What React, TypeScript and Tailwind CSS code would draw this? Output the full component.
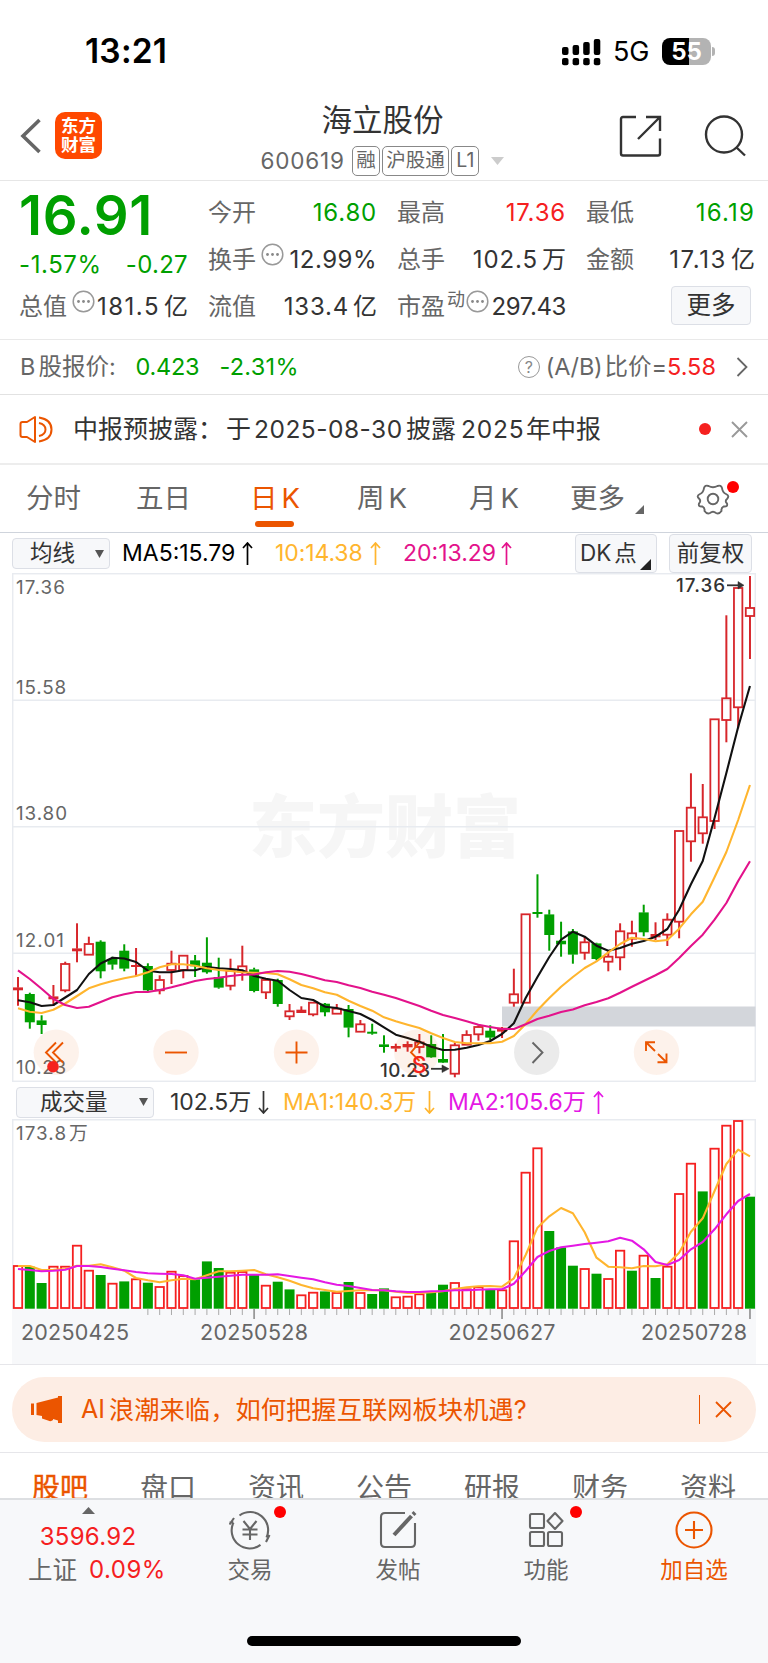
import type { ReactNode } from "react";

const RED = "#d7262b";
const GREEN = "#009f00";
const ORANGE = "#eb5500";

const STEP = 11.806;
const xAt = (i: number) => 18 + i * STEP;

type Kind = "r" | "g";
/** [kind, body top, body bottom, wick top, wick bottom] */
type Candle = [Kind, number, number, number, number];

const candles: Candle[] = [
  ["r", 987.7, 990, 977, 1005.7],
  ["g", 994.3, 1022, 992.7, 1028.7],
  ["g", 1020.7, 1024.7, 1015.3, 1034],
  ["r", 996.7, 999, 985, 1006],
  ["r", 964, 990.3, 961.7, 992.3],
  ["r", 948.7, 951, 923.3, 962.3],
  ["r", 944, 954.7, 936.7, 955],
  ["g", 942, 971, 940.3, 978.3],
  ["g", 959.3, 964.3, 956.7, 969.7],
  ["g", 951, 968.3, 944.3, 971.3],
  ["r", 965.3, 966.7, 948, 975.7],
  ["g", 966.3, 990, 963.3, 991],
  ["r", 980, 990.3, 975.3, 994.3],
  ["r", 963.7, 970, 950.7, 984],
  ["r", 955.7, 970, 955.7, 978.3],
  ["g", 960.7, 966, 955, 977],
  ["g", 963, 972, 937.3, 973.7],
  ["g", 977.3, 987.3, 957.7, 988.7],
  ["r", 970.7, 985.7, 958.7, 990.3],
  ["r", 966.3, 971.5, 945.7, 980.7],
  ["g", 969.7, 990.7, 967.7, 992.3],
  ["r", 980, 992.3, 978.3, 999],
  ["g", 980.3, 1003.7, 978.7, 1006.7],
  ["r", 1011.3, 1016.3, 1004, 1020],
  ["r", 1010, 1012.7, 1006.3, 1013],
  ["r", 1002.7, 1014.3, 1002, 1016.3],
  ["g", 1004, 1012, 1003, 1016.3],
  ["r", 1008.7, 1013.7, 1004, 1014],
  ["g", 1009.3, 1027.3, 1005, 1037.3],
  ["r", 1024.3, 1031.7, 1020, 1032],
  ["g", 1032, 1033.2, 1023.7, 1034.7],
  ["g", 1044.7, 1046.7, 1035.3, 1052.7],
  ["r", 1046.3, 1048.3, 1043.7, 1051.7],
  ["r", 1044.3, 1047, 1041.3, 1051.7],
  ["r", 1042.5, 1047, 1034, 1053.3],
  ["g", 1044.3, 1057, 1035.3, 1057.7],
  ["g", 1059.3, 1062.3, 1034, 1063],
  ["r", 1045.3, 1073.7, 1043, 1077.3],
  ["r", 1035, 1044.7, 1030.3, 1045],
  ["r", 1027, 1034.3, 1025.3, 1040.7],
  ["g", 1031, 1037.3, 1025.3, 1040],
  ["r", 1028, 1031.3, 1027, 1038],
  ["r", 994.3, 1002.7, 968.7, 1006.7],
  ["r", 914.3, 1002.7, 914.3, 1002.7],
  ["g", 912.3, 913.5, 874.3, 917.7],
  ["g", 914.7, 934.7, 909.7, 950.7],
  ["g", 941, 944, 921.7, 956.7],
  ["g", 931.7, 954.3, 929, 963.7],
  ["r", 942.3, 952.7, 936.7, 959.7],
  ["g", 943.7, 958.7, 942.7, 960.3],
  ["r", 956.7, 961.7, 951, 971.3],
  ["r", 931.3, 957.3, 923.3, 970.3],
  ["r", 933.3, 938.7, 920.7, 946.7],
  ["g", 912.7, 932, 904.7, 936.3],
  ["r", 934.3, 937, 922.3, 940],
  ["r", 919.7, 934.7, 913.3, 946],
  ["r", 831, 921.7, 831, 938.3],
  ["r", 807.7, 841.3, 773.3, 861.7],
  ["r", 817.3, 833.3, 784, 843.7],
  ["r", 719.3, 821, 719.3, 829],
  ["r", 698.3, 720, 615.3, 742.3],
  ["r", 588, 707.3, 588, 728.3],
  ["r", 608, 616, 576, 659],
];

const ma5 = [
  1000.3, 1002.3, 1006, 1005, 997.5, 990, 974, 963.5, 957.7, 958.5, 962, 970.7, 972.3, 972.3, 970.3, 970.3,
  967, 968.3, 969, 970.3, 976, 978.7, 980.7, 990, 998, 1000, 1006.7, 1008, 1011, 1014, 1020, 1027.3, 1034.7,
  1038, 1041.7, 1046.7, 1050, 1049.7, 1047.7, 1045, 1041, 1034, 1023.3, 998, 977, 957, 939.7, 931.7, 936.7,
  945.7, 950.7, 948, 943.7, 941, 936.7, 929, 909.7, 884.3, 861, 818, 773, 727, 686,
];
const ma10 = [
  1008.3, 1011.7, 1013, 1009.7, 1003.5, 996, 988.3, 984.3, 981, 978.3, 976, 972.3, 967.3, 964.3, 964.3, 965.7,
  968.3, 970, 971, 972.3, 972.7, 973, 974.3, 979.3, 985, 988.3, 992.3, 994.7, 1000.7, 1006, 1010.7, 1017.3,
  1021.3, 1024.7, 1028, 1033.3, 1038, 1042, 1043.3, 1043.3, 1043.3, 1041.7, 1036, 1024, 1010.3, 998, 986.7,
  977, 968, 961.3, 952.3, 944, 937.7, 939, 941.3, 940, 928.7, 914.3, 901.7, 877.3, 852, 820, 785,
];
const ma20 = [
  970.3, 979, 988.7, 999, 1005, 1008, 1006.7, 1002, 997.3, 994.3, 992, 992, 990, 987.3, 984.3, 981, 979, 977.7,
  976, 974.7, 974.5, 972.3, 971, 971.7, 974, 977, 980.3, 982, 985.3, 988, 991.7, 994.7, 998, 1002, 1006, 1010.7,
  1015, 1018, 1021.3, 1024.7, 1027, 1029, 1029, 1024.3, 1019, 1015.7, 1012, 1009.5, 1005.3, 1002, 998.3, 992.7,
  986.7, 981, 975.3, 969, 958, 946, 934.7, 919.7, 903, 881, 861.3,
];

/** Bar tops of the volume pane, colours in volumeKinds. */
const volumes = [
  1266, 1267, 1283.3, 1266.7, 1266.7, 1245.7, 1270.7, 1275.3, 1283.7, 1281.7, 1279.3, 1283, 1287, 1271.7, 1276,
  1279.7, 1261.7, 1268.3, 1272.7, 1272, 1275, 1285.7, 1282, 1289.7, 1295.3, 1292.7, 1291.7, 1293, 1282.3, 1293,
  1294.3, 1288.7, 1297.3, 1296.7, 1294.3, 1291.3, 1285, 1283, 1289.3, 1287.3, 1290, 1290.3, 1241.3, 1172.7,
  1148.3, 1231.3, 1247.7, 1266, 1269, 1274, 1279, 1250.7, 1271, 1255.7, 1278.3, 1266.7, 1194, 1163.7, 1191.7,
  1148.7, 1125.7, 1121, 1197,
];
const volumeKinds = "rggrrrrgrgrgrrrgggrrgrggrrgrgrgg" + "rrrggrrrgrrrrgggrgrrgrgrrrgrrrg";
const volMa1 = [
  1266, 1266, 1270, 1269.7, 1269, 1265.7, 1265.7, 1264.3, 1267.3, 1270.7, 1278, 1280.3, 1282.3, 1280.3, 1278.7,
  1279.3, 1275.3, 1271.3, 1271.3, 1270.7, 1270, 1274.3, 1277.3, 1280.7, 1285, 1288.3, 1290, 1291.7, 1291, 1290.3,
  1290.3, 1290.3, 1291.7, 1293, 1293, 1292.3, 1291.3, 1289, 1287.3, 1286.3, 1286, 1286.7, 1278.3, 1255, 1227.7,
  1216.3, 1208, 1213.3, 1232.3, 1257.7, 1266.7, 1267.3, 1268.3, 1266, 1266.3, 1264.3, 1252.7, 1231.7, 1218.3,
  1191, 1164, 1149.7, 1156.3,
];
const volMa2 = [
  1269, 1270, 1271.3, 1270.7, 1269.7, 1266, 1266, 1267, 1268.7, 1270.3, 1272, 1273.3, 1273.7, 1274, 1275.3,
  1278.7, 1277.7, 1276.7, 1275.7, 1274.7, 1274.7, 1274.7, 1274.3, 1276, 1277.7, 1279.3, 1282.3, 1284.7, 1286,
  1288, 1290, 1290.3, 1291.3, 1292, 1292, 1291.3, 1291, 1290.3, 1290.3, 1289.7, 1289.3, 1289.3, 1283.7, 1271,
  1257, 1251, 1247.3, 1245.7, 1244, 1242.7, 1241.3, 1237.7, 1240.7, 1249.3, 1262, 1265, 1260, 1249.3, 1242,
  1229.3, 1214.3, 1201, 1194,
];

function Line({ ys, color }: { ys: number[]; color: string }) {
  return (
    <polyline
      points={ys.map((y, i) => `${xAt(i)},${y}`).join(" ")}
      fill="none"
      stroke={color}
      strokeWidth="2.1"
      strokeLinejoin="round"
    />
  );
}

function CandleShape({ i, candle }: { i: number; candle: Candle }) {
  const [kind, top, bottom, high, low] = candle;
  const x = xAt(i);
  const color = kind === "r" ? RED : GREEN;
  const solid = kind === "g" || bottom - top < 4;
  return (
    <g stroke={color} strokeWidth="2">
      {high < top && <path d={`M${x} ${high}V${top}`} />}
      {low > bottom && <path d={`M${x} ${bottom}V${low}`} />}
      {solid ? (
        <rect x={x - 5} y={top - 0.3} width="10" height={Math.max(bottom - top + 0.6, 2)} fill={color} stroke="none" />
      ) : (
        <rect x={x - 4.2} y={top} width="8.4" height={bottom - top} fill="none" strokeWidth="1.8" />
      )}
    </g>
  );
}

function RoundButton({ x, gray, children }: { x: number; gray?: boolean; children: ReactNode }) {
  return (
    <g fill="none" stroke={gray ? "#666" : ORANGE} strokeWidth="1.9">
      <circle cx={x} cy="1052.3" r="22.7" fill={gray ? "#000" : ORANGE} fillOpacity="0.08" stroke="none" />
      {children}
    </g>
  );
}

function PriceChart() {
  return (
    <svg className="ml-3 block h-[509px] w-[744px]" viewBox="12 573 744 509">
      <text x="249" y="852" fontSize="68" textLength="272" className="fill-[#f6f6f6] font-black">
        东方财富
      </text>
      <g fill="none" stroke="#e8ebf0" strokeWidth="1.5">
        <rect x="12.7" y="573.7" width="742.6" height="507.6" />
        <path d="M12 700.2H756M12 826.7H756M12 953.3H756" />
      </g>
      <rect x="502" y="1006.5" width="253.5" height="20" fill="#d3d6db" />
      <g fontSize="18.8" fill="#666">
        <text x="16" y="594" textLength="49">17.36</text>
        <text x="16" y="694" textLength="50">15.58</text>
        <text x="16" y="820" textLength="51">13.80</text>
        <text x="16" y="947" textLength="48">12.01</text>
        <text x="16" y="1074" textLength="50">10.23</text>
      </g>
      {candles.map((c, i) => (
        <CandleShape key={i} i={i} candle={c} />
      ))}
      <Line ys={ma5} color="#111" />
      <Line ys={ma10} color="#ffb52e" />
      <Line ys={ma20} color="#e3128b" />
      <g fontSize="18.8" fill="#333" className="font-medium">
        <text x="676" y="592" textLength="49">17.36</text>
        <text x="380" y="1076.5" textLength="50">10.23</text>
      </g>
      <g stroke="#333" strokeWidth="1.8" fill="#333">
        <path d="M727 585.3H739" />
        <path d="M738 581.5L744 585.3L738 589Z" strokeWidth="0.5" />
        <path d="M431 1068.8H443" />
        <path d="M442 1065L449 1068.8L442 1072.5Z" strokeWidth="0.5" />
      </g>
      <RoundButton x={56.3}>
        <path d="M56 1042.5L46 1052.5L56 1062.5M63 1042.5L53 1052.5L63 1062.5" />
      </RoundButton>
      <RoundButton x={176}>
        <path d="M165 1052.5H187" />
      </RoundButton>
      <RoundButton x={296.5}>
        <path d="M285.5 1052.5H307.5M296.5 1041.5V1063.5" />
      </RoundButton>
      <RoundButton x={416.7}>
        <path d="M419.5 1042.5L411 1052.5L419.5 1061" />
      </RoundButton>
      <RoundButton x={536.7} gray>
        <path d="M532.5 1042.5L542.5 1052.5L532.5 1063" />
      </RoundButton>
      <RoundButton x={656.5}>
        <path d="M646 1051V1042.3H655M646 1042.3L655 1051M666.5 1053.5V1062.3H657.5M666.5 1062.3L658 1054" />
      </RoundButton>
      <circle cx="53" cy="1066.7" r="5.8" fill="#f5231d" />
      <text x="419.3" y="1073" textAnchor="middle" fontSize="23" fill="#f5231d" className="font-medium">
        S
      </text>
    </svg>
  );
}

function VolumeChart() {
  return (
    <svg className="ml-3 block h-[245px] w-[744px]" viewBox="12 1119 744 245">
      <rect x="12" y="1309" width="744" height="55" fill="#f7f8fa" />
      <path d="M12.7 1309V1119.7H755.3V1309" fill="none" stroke="#e8ebf0" strokeWidth="1.5" />
      <g fill="#666" fontSize="18.8">
        <text x="16" y="1140" textLength="50">173.8</text>
        <text x="69" y="1140">万</text>
      </g>
      {volumes.map((top, i) =>
        volumeKinds[i] === "r" ? (
          <rect key={i} x={xAt(i) - 4.2} y={top} width="8.4" height={1308 - top} fill="none" stroke="#f52020" strokeWidth="1.8" />
        ) : (
          <rect key={i} x={xAt(i) - 5} y={top - 0.3} width="10" height={1309 - top} fill={GREEN} />
        ),
      )}
      <Line ys={volMa1} color="#ffb52e" />
      <Line ys={volMa2} color="#e418e4" />
      {volumes.map((_, i) =>
        i < 11 ? null : i % 21 === 20 ? (
          <path key={i} d={`M${xAt(i)} 1309V1319`} stroke="#999" strokeWidth="1.8" />
        ) : (
          <path key={i} d={`M${xAt(i)} 1309V1315`} stroke="#aaa" strokeWidth="1" />
        ),
      )}
      <g fill="#666" fontSize="21.5">
        <text x="21" y="1340" textLength="108">20250425</text>
        <text x="200" y="1340" textLength="108">20250528</text>
        <text x="448.5" y="1340" textLength="107">20250627</text>
        <text x="641" y="1340" textLength="106">20250728</text>
      </g>
    </svg>
  );
}

function StatusBar() {
  return (
    <div className="flex h-[95px] items-center pt-[8px] text-black">
      <span className="ml-[85px] w-[476px] text-[33.5px] font-semibold leading-none tracking-[0.2px]">13:21</span>
      <svg className="h-7 w-[40px]" viewBox="0 0 40 28">
        {[0, 10.6, 21.2, 31.8].map((x, i) => (
          <g key={x}>
            <rect x={x + 1} y={[9, 7, 4, 1][i]} width="6.5" height={[8, 10, 13, 16][i]} rx="2" />
            <rect x={x + 1} y="20" width="6.5" height="7.3" rx="2" />
          </g>
        ))}
      </svg>
      <span className="ml-[12px] w-[49px] text-[27px] leading-none tracking-[-0.2px]">5G</span>
      <div className="flex h-[27px] w-[49px] items-center justify-center rounded-[8px] bg-[linear-gradient(90deg,#000_55%,#b3b3b3_55%)]">
        <span className="text-[24px] font-bold leading-none text-white">55</span>
      </div>
      <div className="ml-[1px] h-[9px] w-[3px] rounded-r-full bg-[#b3b3b3]" />
    </div>
  );
}

function Tag({ children }: { children: ReactNode }) {
  return (
    <span className="ml-[2.5px] flex h-[30px] items-center rounded-[5px] border border-[#888] px-[3px] text-[19.5px] leading-none">
      {children}
    </span>
  );
}

function Header() {
  return (
    <header className="flex h-[86px] items-start border-b border-[#e6e6e6]">
      <svg className="ml-[20px] mt-[23px] h-[36px] w-[22px]" viewBox="0 0 22 36" fill="none" stroke="#666" strokeWidth="3.6">
        <path d="M19.5 2L3 18L19.5 34" />
      </svg>
      <div className="ml-[13px] mt-[17px] flex h-[47px] w-[47px] flex-col items-center justify-center rounded-[10px] bg-[#ff4800] text-[17.5px] font-bold leading-[18.5px] text-white">
        <span>东方</span>
        <span>财富</span>
      </div>
      <div className="flex w-[561px] flex-col items-center">
        <h1 className="mt-[6px] text-[30.5px] leading-[38px] text-[#333]">海立股份</h1>
        <div className="mt-[7px] flex h-[30px] items-center text-[#666]">
          <span className="mr-[5px] text-[22.5px] leading-none tracking-[0.8px]">600619</span>
          <Tag>融</Tag>
          <Tag>沪股通</Tag>
          <Tag>
            <span className="px-[1px]">L1</span>
          </Tag>
          <svg className="ml-[12px] h-2 w-[13px]" viewBox="0 0 13 8">
            <path d="M0 0H13L6.5 8Z" fill="#ccc" />
          </svg>
        </div>
      </div>
      <svg className="-ml-[44px] mt-[20px] h-[43px] w-[43px]" viewBox="0 0 43 43" fill="none" stroke="#333" strokeWidth="2.4">
        <path d="M17 2H4Q2 2 2 4V38.5Q2 40.5 4 40.5H39Q41 40.5 41 38.5V23.5M27 2H41V16M41 2L19 24" />
      </svg>
      <svg className="ml-[42px] mt-[20px] h-[43px] w-[43px]" viewBox="0 0 43 43" fill="none" stroke="#333" strokeWidth="2.4">
        <circle cx="20" cy="19.5" r="18" />
        <path d="M32 32L41 40.5" />
      </svg>
    </header>
  );
}

function Dots() {
  return (
    <svg className="mb-[10px] h-[23px] w-[23px] shrink-0" viewBox="0 0 23 23" fill="none" stroke="#999" strokeWidth="1.5">
      <circle cx="11.5" cy="11.5" r="10.3" />
      <g fill="#888" stroke="none">
        <circle cx="6.5" cy="11.5" r="1.4" />
        <circle cx="11.5" cy="11.5" r="1.4" />
        <circle cx="16.5" cy="11.5" r="1.4" />
      </g>
    </svg>
  );
}

function Quote({
  label,
  value,
  unit,
  color = "text-[#333]",
  track = "tracking-[0.8px]",
  sup,
  dots,
}: {
  label: string;
  value: string;
  unit?: string;
  color?: string;
  track?: string;
  sup?: string;
  dots?: boolean;
}) {
  return (
    <div className="flex h-[47px] items-center whitespace-nowrap text-[24px] leading-none">
      <span className="text-[#666]">{label}</span>
      {sup && <span className="mb-[14px] ml-[2px] text-[18px] text-[#666]">{sup}</span>}
      {dots && <span className={sup ? "ml-[1px]" : "ml-[5px]"}><Dots /></span>}
      <span className={`ml-auto ${color} ${track}`}>{value}</span>
      {unit && <span className={`ml-[4px] ${color}`}>{unit}</span>}
    </div>
  );
}

function Quotes() {
  return (
    <section className="flex h-[159px] gap-[20px] border-b border-[#e9e9e9] pl-[19px] pt-[8px]">
      <div className="w-[169px]">
        <div className="-mt-[2px] flex h-[57px] items-center text-[54.5px] font-semibold leading-none tracking-[0.6px] text-[#009f00]">
          16.91
        </div>
        <div className="-mb-[1px] flex h-[40px] items-center justify-between pt-[2px] text-[24px] leading-none text-[#009f00]">
          <span className="tracking-[0.6px]">-1.57%</span>
          <span className="tracking-[0.3px]">-0.27</span>
        </div>
        <Quote label="总值" value="181.5" unit="亿" track="tracking-[1.5px]" dots />
      </div>
      <div className="w-[169px]">
        <Quote label="今开" value="16.80" color="text-[#009f00]" />
        <Quote label="换手" value="12.99%" track="tracking-[0.5px]" dots />
        <Quote label="流值" value="133.4" unit="亿" />
      </div>
      <div className="w-[169px]">
        <Quote label="最高" value="17.36" color="text-[#f5201f]" />
        <Quote label="总手" value="102.5" unit="万" track="tracking-[0.9px]" />
        <Quote label="市盈" value="297.43" sup="动" track="tracking-[-0.4px]" dots />
      </div>
      <div className="w-[169px]">
        <Quote label="最低" value="16.19" color="text-[#009f00]" track="tracking-[1.2px]" />
        <Quote label="金额" value="17.13" unit="亿" track="tracking-[1.6px]" />
        <button className="ml-auto mr-[4px] mt-[3px] flex h-[39px] w-[80px] items-center justify-center rounded-[4px] border border-[#dcdfe6] bg-[#f7f8fa] text-[24.5px] leading-none text-[#333]">
          更多
        </button>
      </div>
    </section>
  );
}

function BShare() {
  return (
    <section className="flex h-[55px] items-center border-b border-[#e2e2e2] pl-[20px] text-[23.5px] leading-none text-[#666]">
      <span>B</span>
      <span className="ml-[3px] w-[97px]">股报价:</span>
      <span className="w-[84px] tracking-[-0.2px] text-[#009f00]">0.423</span>
      <span className="tracking-[0.3px] text-[#009f00]">-2.31%</span>
      <div className="ml-auto flex items-center">
        <span className="flex h-[22px] w-[22px] items-center justify-center rounded-full border border-[#999] text-[16px] text-[#888]">?</span>
        <span className="ml-[6px] tracking-[-0.2px]">(A/B)</span>
        <span className="ml-[2px]">比价=</span>
        <span className="w-[69px] text-[#f5201f]">5.58</span>
      </div>
      <svg className="mr-[20px] h-[20px] w-[12px]" viewBox="0 0 12 20" fill="none" stroke="#666" strokeWidth="1.8">
        <path d="M1.5 1L10.5 10L1.5 19" />
      </svg>
    </section>
  );
}

function Notice() {
  return (
    <section className="flex h-[70px] items-center border-b-2 border-[#ededed] text-[#333]">
      <svg className="ml-[19px] h-[29px] w-[34px]" viewBox="0 0 34 29" fill="none" stroke={ORANGE} strokeWidth="2" strokeLinejoin="round">
        <path d="M16 2V27L8 22H3.5Q1.5 22 1.5 20V9Q1.5 7 3.5 7H8Z" />
        <path d="M20 8Q26.5 9.5 26.5 14.5Q26.5 19.5 20 21M20 2.5Q32.5 4.5 32.5 14.5Q32.5 24.5 20 26.5" />
      </svg>
      <p className="ml-[20px] flex items-center text-[25px] leading-none">
        <span className="w-[153px]">中报预披露：</span>
        <span className="w-[28px]">于</span>
        <span className="w-[152px] text-[24.5px] tracking-[0.5px]">2025-08-30</span>
        <span className="w-[55px]">披露</span>
        <span className="w-[65px] text-[24.5px] tracking-[0.8px]">2025</span>
        <span>年中报</span>
      </p>
      <span className="ml-auto h-[12px] w-[12px] rounded-full bg-[#f5201f]" />
      <svg className="ml-[20px] mr-[20px] h-[17px] w-[17px]" viewBox="0 0 17 17" stroke="#999" strokeWidth="1.9">
        <path d="M1 1L16 16M16 1L1 16" />
      </svg>
    </section>
  );
}

function PeriodTabs() {
  return (
    <nav className="flex h-[68px] items-center border-b border-[#cfd4dc] pl-[26px] pt-[1px] text-[27.5px] leading-none text-[#666]">
      <span className="w-[110px]">分时</span>
      <span className="w-[114px]">五日</span>
      <span className="relative w-[107px] text-[#eb5500]">
        日<span className="ml-[4px]">K</span>
        <i className="absolute left-[5px] top-[36px] h-[6px] w-[39px] rounded-full bg-[#eb5500]" />
      </span>
      <span className="w-[112px]">
        周<span className="ml-[4px]">K</span>
      </span>
      <span className="w-[101px]">
        月<span className="ml-[4px]">K</span>
      </span>
      <span>更多</span>
      <svg className="ml-[10px] mt-[20px] h-[9px] w-[9px]" viewBox="0 0 9 9">
        <path d="M9 0V9H0Z" fill="#666" />
      </svg>
      <div className="relative ml-[52px]">
        <svg className="h-[34px] w-[34px]" viewBox="0 0 34 34" fill="none" stroke="#666" strokeWidth="1.9" strokeLinejoin="round">
          <path d="M12.5 4Q17 6.5 21.5 4Q25 2.8 26 6Q26.5 10.5 30 12Q34 14 31 17Q28.5 19 31 21.5Q32 25 27.5 24.5Q25 26 25.5 29Q23 32.5 20 31Q17 28.5 14 31Q11 32.5 8.5 29Q9 26 6.5 24.5Q2 25 3 21.5Q5.5 19 3 16.5Q0 14 4 12Q7.5 10.5 8 6Q9 2.8 12.5 4Z" />
          <circle cx="17" cy="17" r="5.3" />
        </svg>
        <i className="absolute left-[31px] top-[-1px] h-[12px] w-[12px] rounded-full bg-[#ff0000]" />
      </div>
    </nav>
  );
}

function Arrow({ down, className }: { down?: boolean; className: string }) {
  return (
    <svg className={`h-[23px] w-[11px] shrink-0 ${className}`} viewBox="0 0 11 23" fill="none" stroke="currentColor" strokeWidth="1.7">
      <path d={down ? "M5.5 0V22M1 17L5.5 22L10 17" : "M5.5 23V1M1 6L5.5 1L10 6"} />
    </svg>
  );
}

function PickerButton({ label, className }: { label: string; className: string }) {
  return (
    <button className={`flex h-[31px] items-center rounded-[4px] border border-[#dcdfe6] bg-[#f7f8fa] text-[22.5px] leading-none text-[#333] ${className}`}>
      {label}
      <svg className="ml-auto mr-[5px] h-[8px] w-[9px]" viewBox="0 0 9 8">
        <path d="M0 0H9L4.5 8Z" fill="#555" />
      </svg>
    </button>
  );
}

function MaRow() {
  return (
    <div className="flex h-[40px] items-center whitespace-nowrap pl-[12px] pt-[1px] text-[23px] leading-none">
      <PickerButton label="均线" className="w-[98px] pl-[17px]" />
      <span className="ml-[12px] w-[120px] text-black">MA5:15.79</span>
      <Arrow className="text-black" />
      <span className="ml-[22px] w-[95px] tracking-[-0.1px] text-[#ffb52e]">10:14.38</span>
      <Arrow className="text-[#ffb52e]" />
      <span className="ml-[22px] w-[98px] text-[#e3128b]">20:13.29</span>
      <Arrow className="text-[#e3128b]" />
      <button className="ml-auto flex h-[39px] w-[82px] items-center rounded-[4px] border border-[#dcdfe6] bg-[#f7f8fa] pl-[4px] text-[22.5px] leading-none text-[#333]">
        DK<span className="ml-[3px]">点</span>
        <svg className="ml-[3px] mt-[22px] h-[11px] w-[11px]" viewBox="0 0 11 11">
          <path d="M11 0V11H0Z" fill="#222" />
        </svg>
      </button>
      <button className="ml-[12px] mr-[16px] flex h-[39px] w-[83px] items-center justify-center rounded-[4px] border border-[#dcdfe6] bg-[#f7f8fa] text-[22.5px] leading-none text-[#333]">
        前复权
      </button>
    </div>
  );
}

function VolumeRow() {
  return (
    <div className="flex h-[37px] items-center whitespace-nowrap pl-[16px] pt-[3px] text-[23px] leading-none">
      <PickerButton label="成交量" className="w-[138px] pl-[23px]" />
      <span className="ml-[16px] w-[88px] text-[#333]">102.5万</span>
      <Arrow down className="text-[#333]" />
      <span className="ml-[14px] w-[141px] text-[#ffb52e]">MA1:140.3万</span>
      <Arrow down className="text-[#ffb52e]" />
      <span className="ml-[13px] w-[145px] text-[#e418e4]">MA2:105.6万</span>
      <Arrow className="text-[#e418e4]" />
    </div>
  );
}

function Banner() {
  return (
    <section className="h-[89px] border-y border-[#e6e6ea] px-[12px] pt-[12px]">
      <div className="flex h-[65px] items-center rounded-full bg-[#fdede4] text-[#eb5500]">
        <svg className="ml-[19px] h-[27px] w-[31px]" viewBox="0 0 31 27" fill="currentColor">
          <path d="M0 7.5H3V19H0ZM5.5 7L27 1.5V0H31V27H27V24.5L22 23V24Q20 26 17 24.5L11 22.5V20L5.5 19Z" />
        </svg>
        <span className="ml-[19px] text-[25px] leading-none">AI</span>
        <span className="ml-[4px] text-[25.3px] leading-none">浪潮来临，如何把握互联网板块机遇?</span>
        <i className="ml-auto h-[29px] w-[1.5px] bg-[#eb5500]" />
        <svg className="ml-[15px] mr-[24px] h-[17px] w-[17px]" viewBox="0 0 17 17" stroke="currentColor" strokeWidth="1.8">
          <path d="M1 1L16 16M16 1L1 16" />
        </svg>
      </div>
    </section>
  );
}

const sections = ["股吧", "盘口", "资讯", "公告", "研报", "财务", "资料"];

function SectionTabs() {
  return (
    <nav className="flex h-[45px] overflow-hidden px-[6px] pt-[21px] text-center text-[28px] leading-[28px] text-[#666]">
      {sections.map((name, i) => (
        <span key={name} className={i === 0 ? "w-[108px] text-[#eb5500] [-webkit-text-stroke:0.4px]" : "w-[108px]"}>
          {name}
        </span>
      ))}
    </nav>
  );
}

function Action({ label, dot, className, children }: { label: string; dot?: boolean; className?: string; children: ReactNode }) {
  return (
    <div className={`relative flex w-[148px] flex-col items-center pt-[9px] ${className ?? "text-[#666]"}`}>
      <svg className="h-[42px] w-[42px]" viewBox="0 0 42 42" fill="none" stroke="currentColor" strokeWidth="2.1">
        {children}
      </svg>
      {dot && <i className="absolute left-[98px] top-[6px] h-[12px] w-[12px] rounded-full bg-[#ff0000]" />}
      <span className="mt-[7px] text-[22.5px] leading-[24px]">{label}</span>
    </div>
  );
}

function BottomBar() {
  return (
    <footer className="flex h-[165px] flex-col border-t-2 border-[#dddfe2] bg-[#f7f8fa]">
      <div className="flex h-[136px]">
        <div className="flex w-[176px] flex-col items-center text-[24px] leading-none text-[#f5201f]">
          <svg className="mt-[7px] h-[7px] w-[13px]" viewBox="0 0 13 7">
            <path d="M0 7H13L6.5 0Z" fill="#666" />
          </svg>
          <span className="mt-[11px] tracking-[0.3px]">3596.92</span>
          <span className="ml-[28px] mt-[9px] flex w-[140px] items-center self-start">
            <span className="text-[24.5px] text-[#666]">上证</span>
            <span className="ml-[12px] tracking-[0.5px]">0.09%</span>
          </span>
        </div>
        <Action label="交易" dot>
          <path d="M10.5 6.5A18 18 0 0 1 37.5 28.5M37 33L40.5 26M31.5 35.8A18 18 0 0 1 4.5 13.5M5 9L0.5 15.5M4.5 13.5H0.5" />
          <path d="M14.5 12L21 20L27.5 12M21 20V31M13.5 20.5H28.5M13.5 25.5H28.5" />
        </Action>
        <Action label="发帖">
          <path d="M28 4H8Q4 4 4 8V34Q4 38 8 38H34Q38 38 38 34V14" />
          <path d="M17 26L34.5 7" strokeWidth="4" />
          <path d="M36 5.5L38 3.5" strokeWidth="4" />
        </Action>
        <Action label="功能" dot>
          <rect x="5" y="5" width="14" height="14" rx="1.5" />
          <rect x="5" y="23" width="14" height="14" rx="1.5" />
          <rect x="23" y="23" width="14" height="14" rx="1.5" />
          <path d="M30 4L37.5 12L30 20L22.5 12Z" strokeLinejoin="round" />
        </Action>
        <Action label="加自选" className="text-[#eb5500]">
          <circle cx="21" cy="21" r="17.5" />
          <path d="M12 21H30M21 12V30" />
        </Action>
      </div>
      <div className="mx-auto h-[10px] w-[274px] rounded-full bg-black" />
    </footer>
  );
}

export default function App() {
  return (
    <div className="h-[1663px] w-[768px] overflow-hidden bg-white font-[Inter,'Noto_Sans_CJK_SC',sans-serif]">
      <StatusBar />
      <Header />
      <Quotes />
      <BShare />
      <Notice />
      <PeriodTabs />
      <MaRow />
      <PriceChart />
      <VolumeRow />
      <VolumeChart />
      <Banner />
      <SectionTabs />
      <BottomBar />
    </div>
  );
}
